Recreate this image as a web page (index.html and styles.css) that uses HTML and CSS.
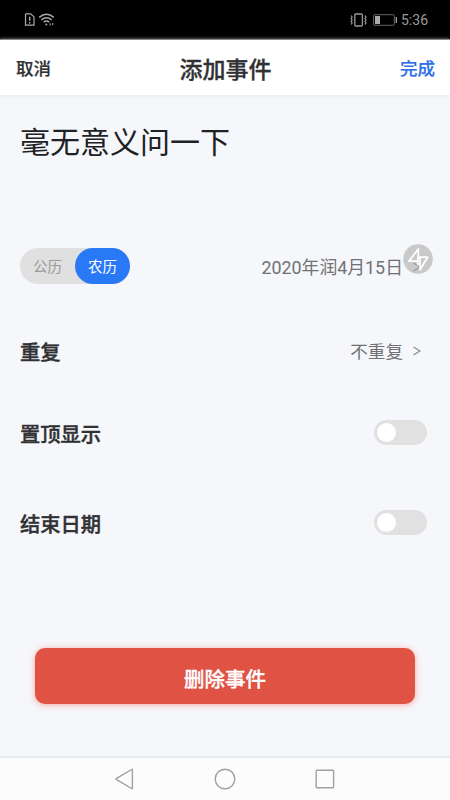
FILE: index.html
```html
<!DOCTYPE html>
<html lang="zh-CN">
<head>
<meta charset="UTF-8">
<title>添加事件</title>
<link rel="stylesheet" href="styles.css">
</head>
<body>
<div class="screen">
  <div class="status">
    <svg class="status-left" width="32" height="16" viewBox="0 0 32 16" fill="none" stroke="#aaa">
      <path d="M2.3 1.9h4.4l3.3 3v8.3H1.5V2.7q0-.8.8-.8z" stroke-width="1.2"/>
      <path d="M5.7 4.8v4M5.7 9.9v1.6" stroke-width="1.4"/>
      <path d="M15.2 5.4q7.3-6.2 14.6 0M17.4 7.9q5.1-4.3 10.2 0M19.7 10.2q2.8-2.3 5.6 0" stroke-width="1.4"/>
      <circle cx="22.3" cy="12.5" r="1.1" fill="#999" stroke="none"/>
      <path d="M26.2 11.2v2.3M28.8 11v2.3" stroke-width="1"/>
    </svg>
    <div class="status-right">
      <svg width="48" height="16" viewBox="0 0 48 16" fill="none" stroke="#999">
        <rect x="4.8" y="2" width="7.6" height="12" rx="1" stroke-width="1.3"/>
        <path d="M1.1 3.5l1 1.5-1 1.5 1 1.5-1 1.5 1 1.5-1 1.5M15 3.5l1 1.5-1 1.5 1 1.5-1 1.5 1 1.5-1 1.5" stroke-width="1.2"/>
        <rect x="23.6" y="2.7" width="20.7" height="10.6" rx="1.4" stroke="#666"/>
        <path d="M25 4h5v8h-5z" fill="#aaa" stroke="none"/>
        <path d="M46.3 5v6" stroke-width="1.4"/>
      </svg>
      <span class="clock">5:36</span>
    </div>
  </div>
  <header class="header">
    <span class="cancel">取消</span>
    <h1 class="title">添加事件</h1>
    <span class="done">完成</span>
  </header>
  <main class="content">
    <div class="event-name">毫无意义问一下</div>
    <div class="row row-date">
      <div class="segment"><span class="option">公历</span><span class="option option-on">农历</span></div>
      <div class="value date">2020年润4月15日<svg class="chevron" width="8" height="10" viewBox="0 0 8 10"><path d="M.5 1l6.5 4-6.5 4"/></svg></div>
      <svg class="assist" width="30" height="30" viewBox="0 0 30 30">
        <circle cx="15" cy="15" r="14.8"/>
        <path d="M14.8 17.2H5.8L15.3 5v9M14.8 13.2h9.8L17 25.8V13.2M14.8 13.2v8"/>
      </svg>
    </div>
    <div class="row row-repeat">
      <span class="label">重复</span>
      <div class="value">不重复<svg class="chevron" width="8" height="10" viewBox="0 0 8 10"><path d="M.5 1l6.5 4-6.5 4"/></svg></div>
    </div>
    <div class="row row-pin"><span class="label">置顶显示</span><span class="switch"></span></div>
    <div class="row row-end"><span class="label">结束日期</span><span class="switch"></span></div>
    <div class="delete">删除事件</div>
  </main>
  <nav class="nav">
    <svg width="22" height="22" viewBox="0 0 22 22"><path d="M18.4 1.8v18.4q0 .8-.8.3L2.2 11.4q-.6-.4 0-.8L17.6 1.5q.8-.5.8.3z"/></svg>
    <svg width="22" height="22" viewBox="0 0 22 22"><circle cx="11" cy="11" r="9.8"/></svg>
    <svg width="22" height="22" viewBox="0 0 22 22"><rect x="2.2" y="2.3" width="17.4" height="17.4" rx=".8"/></svg>
  </nav>
</div>
</body>
</html>
```

FILE: styles.css
```css
* { box-sizing: border-box; }
body {
  margin: 0;
  font-family: Roboto, "Noto Sans CJK SC", sans-serif;
  color: #303133;
}
.screen {
  display: flex;
  flex-direction: column;
  width: 450px;
  height: 800px;
  background: #f5f7fb;
  overflow: hidden;
}
.status {
  display: flex;
  justify-content: space-between;
  align-items: center;
  height: 39px;
  padding: 0 22px 0 24px;
  background: #000;
}
.status-right { display: flex; align-items: center; gap: 3px; }
.clock { padding-top: 1px; font-size: 14px; line-height: 18px; color: #999; }
.header {
  display: grid;
  grid-template-columns: 1fr auto 1fr;
  align-items: center;
  height: 56px;
  padding: 0 15px 0 16px;
  border-top: 1px solid #888;
  background: #fff;
  box-shadow: 0 1px 4px #e8eaee;
}
.cancel, .done { font-size: 17.5px; font-weight: 500; -webkit-text-stroke: .2px; }
.done { color: #2d70e8; text-align: right; }
.title { margin: 0; font-size: 23px; font-weight: 500; -webkit-text-stroke: .3px; }
.content { display: flex; flex-direction: column; flex: 1; }
.event-name { height: 153px; padding: 26px 20px 0; font-size: 30px; line-height: 44px; color: #202124; }
.row {
  display: flex;
  justify-content: space-between;
  align-items: center;
  position: relative;
  height: 36px;
  padding: 0 23px 0 20px;
}
.segment { display: flex; width: 110px; height: 36px; border-radius: 18px; background: #e0e0e0; }
.option { width: 55px; padding-top: 2px; font-size: 14.5px; line-height: 36px; text-align: center; color: #999; }
.option-on { border-radius: 18px; background: #2979f6; color: #fff; }
.value { display: flex; align-items: center; font-size: 17.6px; line-height: 24px; color: #707174; padding: 2px 6px 0 0; }
.date { padding-top: 3px; font-size: 17.85px; }
.chevron { margin: 0 0 2px 10px; fill: none; stroke: #85868a; stroke-width: 1.1; }
.date .chevron { stroke: #333; }
.assist { position: absolute; left: 403px; top: -4px; }
.assist circle { fill: #b9b9b9; fill-opacity: .75; }
.assist path { fill: none; stroke: #fff; stroke-width: 1.7; stroke-linejoin: round; }
.row-repeat { margin-top: 49px; }
.row-pin { margin-top: 46px; }
.row-end { margin-top: 54px; }
.label { padding-top: 3px; font-size: 20.3px; line-height: 30px; font-weight: 500; -webkit-text-stroke: .4px; }
.switch { width: 53px; height: 25px; margin-bottom: 1px; padding: 3px; border-radius: 13px; background: #e1e1e1; }
.switch::before { content: ""; display: block; width: 19px; height: 19px; border-radius: 50%; background: #fff; }
.delete {
  height: 56px;
  margin: 107px 35px 0;
  padding-top: 4px;
  border-radius: 10px;
  background: #e05243;
  box-shadow: 0 1px 6px rgba(255, 90, 75, .5);
  color: #fff;
  font-size: 20.5px;
  font-weight: 500;
  -webkit-text-stroke: .3px;
  line-height: 56px;
  text-align: center;
}
.nav {
  display: flex;
  justify-content: center;
  align-items: center;
  gap: 78px;
  height: 44px;
  border-top: 2px solid #e4eaf0;
  background: #fcfcfc;
}
.nav svg { fill: none; stroke: #a0a0a0; stroke-width: 1.4; }
```
